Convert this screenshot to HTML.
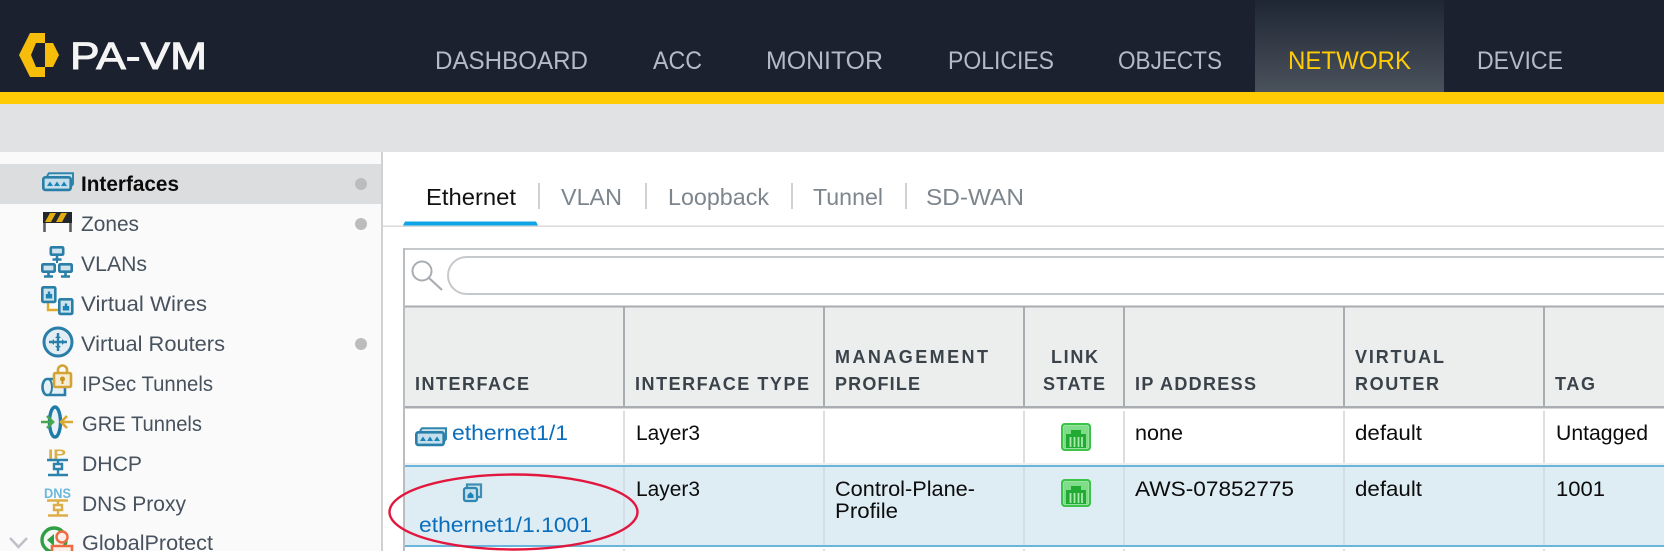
<!DOCTYPE html>
<html><head><meta charset="utf-8"><title>PA-VM</title>
<style>html,body{margin:0;padding:0;background:#fff;width:1664px;height:551px;overflow:hidden}svg{display:block}
text{font-family:"Liberation Sans",sans-serif}
.n{font-size:25px;fill:#b4bac6}.s{font-size:21px;fill:#47525e}.t{font-size:23px;fill:#7d858d}
.h{font-size:18px;font-weight:bold;fill:#3a424a}.c{font-size:21px;fill:#0c0c0c}.l{font-size:21px;fill:#0a6ebd}</style></head><body>
<svg width="1664" height="551" viewBox="0 0 1664 551" xmlns="http://www.w3.org/2000/svg">
<defs>
<linearGradient id="g" x1="0" y1="0" x2="0" y2="1"><stop offset="0" stop-color="#1f2634"/><stop offset="1" stop-color="#4a525c"/></linearGradient>
<g id="ifc"><path d="M5 4 L7 1.300 H31 V12 L29 14.500" fill="#cfe3ed" stroke="#2f86ae" stroke-width="2"/><rect x="1.300" y="5.300" width="27.400" height="12.600" rx="2" fill="#c4deeb" stroke="#2a7fa8" stroke-width="2.600"/><path d="M5 14 l3-4.500 3 4.500z M12 14 l3-4.500 3 4.500z M19 14 l3-4.500 3 4.500z" fill="#1b83b8"/></g>
<g id="mon"><rect x="1.300" y="1.300" width="12.400" height="7.400" rx="1" fill="#cfe3ed" stroke="#2a7fa8" stroke-width="2.600"/><path d="M7.500 9v3.500M3 13.500h9" stroke="#2a7fa8" stroke-width="2.600" fill="none"/></g>
<g id="port"><rect x="1.300" y="1.300" width="13" height="14.600" rx="1.200" fill="#cfe3ed" stroke="#2a7fa8" stroke-width="2.600"/><path d="M4.800 12.500V8h2V5.500h2.400V8h2v4.500z" fill="#1b83b8"/></g>
<g id="lnk"><rect x="1.200" y="1.200" width="27.600" height="25.600" rx="2.500" fill="#d4f3d6" stroke="#3cc44a" stroke-width="2.400"/><rect x="3" y="3" width="24" height="22" fill="#7fdc88"/><path d="M5 25V11H10V7H20V11H25V25Z" fill="#22ab33"/><path d="M9.500 14v10M13.500 14v10M17.500 14v10M21 14v10" stroke="#a9e9ae" stroke-width="1.800"/></g>
</defs>
<rect width="1664" height="92" fill="#1b212f"/>
<rect x="1255" width="189" height="92" fill="url(#g)"/>
<rect y="92" width="1664" height="12" fill="#ffcb05"/>
<rect y="104" width="1664" height="48" fill="#e1e2e4"/>
<path d="M30 33H45V43H36L31 55L36 67H45V77H30L19 55Z" fill="#f7bd0b"/><path d="M45 43H53L59 55L53 67H45Z" fill="#f7bd0b"/>
<text x="70" y="69" font-size="38" fill="#f4f4f4" stroke="#f4f4f4" stroke-width="1" textLength="137" lengthAdjust="spacingAndGlyphs">PA-VM</text>
<text class="n" x="435" y="69" textLength="153" lengthAdjust="spacingAndGlyphs">DASHBOARD</text>
<text class="n" x="653" y="69" textLength="49" lengthAdjust="spacingAndGlyphs">ACC</text>
<text class="n" x="766" y="69" textLength="117" lengthAdjust="spacingAndGlyphs">MONITOR</text>
<text class="n" x="948" y="69" textLength="106" lengthAdjust="spacingAndGlyphs">POLICIES</text>
<text class="n" x="1118" y="69" textLength="104" lengthAdjust="spacingAndGlyphs">OBJECTS</text>
<text class="n" x="1288" y="69" textLength="123" lengthAdjust="spacingAndGlyphs" style="fill:#ffcb05">NETWORK</text>
<text class="n" x="1477" y="69" textLength="86" lengthAdjust="spacingAndGlyphs">DEVICE</text>

<rect y="152" width="381" height="399" fill="#fafafa"/>
<rect y="164" width="381" height="40" fill="#dcdddf"/>
<rect x="381" y="152" width="2" height="399" fill="#cfd1d3"/>
<g fill="#bcbcbc"><circle cx="361" cy="184" r="6"/><circle cx="361" cy="224" r="6"/><circle cx="361" cy="344" r="6"/></g>
<text x="81" y="191" font-size="21" font-weight="bold" fill="#0b0b0b" textLength="98" lengthAdjust="spacingAndGlyphs">Interfaces</text>
<text class="s" x="81" y="231" textLength="58" lengthAdjust="spacingAndGlyphs">Zones</text>
<text class="s" x="81" y="271" textLength="66" lengthAdjust="spacingAndGlyphs">VLANs</text>
<text class="s" x="81" y="311" textLength="126" lengthAdjust="spacingAndGlyphs">Virtual Wires</text>
<text class="s" x="81" y="351" textLength="144" lengthAdjust="spacingAndGlyphs">Virtual Routers</text>
<text class="s" x="82" y="391" textLength="131" lengthAdjust="spacingAndGlyphs">IPSec Tunnels</text>
<text class="s" x="82" y="431" textLength="120" lengthAdjust="spacingAndGlyphs">GRE Tunnels</text>
<text class="s" x="82" y="471" textLength="60" lengthAdjust="spacingAndGlyphs">DHCP</text>
<text class="s" x="82" y="511" textLength="104" lengthAdjust="spacingAndGlyphs">DNS Proxy</text>
<text class="s" x="82" y="550" textLength="131" lengthAdjust="spacingAndGlyphs">GlobalProtect</text>
<use href="#ifc" x="42" y="172"/>
<!-- Zones -->
<path d="M44.500 213V232M70.500 213V232" stroke="#5a5d61" stroke-width="2.600"/>
<rect x="43" y="212" width="29" height="11" fill="#23262b"/>
<path d="M45 222l5-9h6l-5 9zM56 222l5-9h6l-5 9z" fill="#e3ad12"/>
<!-- VLANs -->
<use href="#mon" x="49.500" y="246"/><use href="#mon" x="41" y="263"/><use href="#mon" x="58" y="263"/>
<path d="M57 259V263" stroke="#2a7fa8" stroke-width="2"/>
<!-- Wires -->
<path d="M48 303V310H59" fill="none" stroke="#e0a92e" stroke-width="2.400"/>
<use href="#port" x="41" y="286"/><use href="#port" x="58" y="298"/>
<!-- Router -->
<circle cx="58" cy="342" r="14" fill="#e2eef4" stroke="#2a7fa8" stroke-width="3"/>
<path d="M49 342H67M58 333V351" stroke="#2a7fa8" stroke-width="2.400"/>
<path d="M58 335l3 3h-6zM58 349l3-3h-6zM51 342l3-3v6zM65 342l-3-3v6z" fill="#2a7fa8"/>
<!-- IPSec -->
<path d="M65 379H47a4.500 8 0 0 0 0 16H65V388" fill="#e6f0f5" stroke="#2a7fa8" stroke-width="2.600"/>
<path d="M48 379a4 8 0 0 1 0 16" fill="none" stroke="#2a7fa8" stroke-width="2"/>
<path d="M58 373V370a4.500 4.500 0 0 1 9 0V373" fill="none" stroke="#d3a333" stroke-width="2.600"/>
<rect x="54" y="373" width="17" height="14" rx="1.500" fill="#f5ecd6" stroke="#d3a333" stroke-width="2.600"/>
<circle cx="62.500" cy="379" r="2.500" fill="#c9941f"/><rect x="61.500" y="380" width="2" height="4" fill="#c9941f"/>
<!-- GRE -->
<ellipse cx="55" cy="422" rx="5.500" ry="15" fill="#e7f1f6" stroke="#1e7ba8" stroke-width="3.400"/>
<path d="M41 422H52M47 416L53 422L47 428" fill="none" stroke="#4aa64b" stroke-width="2.600"/>
<path d="M73 422H62M67 416L61 422L67 428" fill="none" stroke="#dba832" stroke-width="2.600"/>
<!-- DHCP -->
<text x="48" y="459" font-size="14" font-weight="bold" fill="#dcae48" textLength="18" lengthAdjust="spacingAndGlyphs">IP</text>
<path d="M47 460H68M58 460V464M54 464H62V469H54ZM58 469V474M48 475H68" fill="none" stroke="#2a82ad" stroke-width="2.400"/>
<!-- DNS -->
<text x="44" y="498" font-size="13.500" font-weight="bold" fill="#6db7dc" textLength="27" lengthAdjust="spacingAndGlyphs">DNS</text>
<path d="M47 500.500H68M58 501V505M54 505H62V510H54ZM58 510V515M48 515.500H68" fill="none" stroke="#dcae48" stroke-width="2.400"/>
<!-- GP -->
<path d="M10 538L18.500 547L27 538" fill="none" stroke="#bcc0c4" stroke-width="2.400"/>
<circle cx="54" cy="540" r="12" fill="#f5f9f3" stroke="#2f9e44" stroke-width="3.400"/>
<path d="M47 540L54 534V546Z" fill="#2f9e44"/>
<circle cx="62" cy="537" r="5.500" fill="#fdeee8" stroke="#ee6a41" stroke-width="2.400"/>
<path d="M52 551V546H72V551" fill="#fdeee8" stroke="#ee6a41" stroke-width="2.600"/>

<!-- Tabs -->
<text x="426" y="205" font-size="23" fill="#111" textLength="90" lengthAdjust="spacingAndGlyphs">Ethernet</text>
<text class="t" x="561" y="205" textLength="61" lengthAdjust="spacingAndGlyphs">VLAN</text>
<text class="t" x="668" y="205" textLength="101" lengthAdjust="spacingAndGlyphs">Loopback</text>
<text class="t" x="813" y="205" textLength="70" lengthAdjust="spacingAndGlyphs">Tunnel</text>
<text class="t" x="926" y="205" textLength="98" lengthAdjust="spacingAndGlyphs">SD-WAN</text>
<g fill="#cfd2d4"><rect x="538" y="183" width="2" height="26"/><rect x="645" y="183" width="2" height="26"/><rect x="791" y="183" width="2" height="26"/><rect x="905" y="183" width="2" height="26"/></g>
<rect x="383" y="225.500" width="1281" height="1.500" fill="#d8dadc"/>
<path d="M403 225.500L405 221.500H536L538 225.500Z" fill="#0ea5e6"/>

<!-- Search -->
<rect x="404" y="248" width="1260" height="2" fill="#c6c9cc"/>
<circle cx="422" cy="271" r="9.500" fill="none" stroke="#a9adb1" stroke-width="2"/><path d="M429 278L442 290" stroke="#a9adb1" stroke-width="2.200"/>
<path d="M1664 257H466.500a18 18 0 0 0 0 37H1664" fill="#fff" stroke="#c6c9cc" stroke-width="2"/>

<!-- Table header -->
<rect x="405" y="307" width="1259" height="100" fill="#eceeee"/>
<rect x="404" y="305.500" width="1260" height="2" fill="#a9adb1"/>
<rect x="404" y="406" width="1260" height="2.500" fill="#a9adb1"/>
<!-- Rows -->
<rect x="405" y="466" width="1259" height="80" fill="#deecf4"/>
<rect x="404" y="465" width="1260" height="2" fill="#6bb5dc"/>
<rect x="404" y="545" width="1260" height="2" fill="#6bb5dc"/>
<rect x="404" y="463" width="1260" height="2" fill="#eef0f0"/>
<rect x="403" y="248" width="2" height="303" fill="#b9bdc0"/>
<g fill="#a9adb1"><rect x="623" y="307" width="2" height="100"/><rect x="823" y="307" width="2" height="100"/><rect x="1023" y="307" width="2" height="100"/><rect x="1123" y="307" width="2" height="100"/><rect x="1343" y="307" width="2" height="100"/><rect x="1543" y="307" width="2" height="100"/></g>
<g fill="#dcdee0"><rect x="623" y="411" width="2" height="52"/><rect x="823" y="411" width="2" height="52"/><rect x="1023" y="411" width="2" height="52"/><rect x="1123" y="411" width="2" height="52"/><rect x="1343" y="411" width="2" height="52"/><rect x="1543" y="411" width="2" height="52"/>
<rect x="623" y="467" width="2" height="78" fill="#d3dfe6"/><rect x="823" y="467" width="2" height="78" fill="#d3dfe6"/><rect x="1023" y="467" width="2" height="78" fill="#d3dfe6"/><rect x="1123" y="467" width="2" height="78" fill="#d3dfe6"/><rect x="1343" y="467" width="2" height="78" fill="#d3dfe6"/><rect x="1543" y="467" width="2" height="78" fill="#d3dfe6"/>
<rect x="623" y="549" width="2" height="2"/><rect x="823" y="549" width="2" height="2"/><rect x="1023" y="549" width="2" height="2"/><rect x="1123" y="549" width="2" height="2"/><rect x="1343" y="549" width="2" height="2"/><rect x="1543" y="549" width="2" height="2"/></g>

<text class="h" x="415" y="390" textLength="114" lengthAdjust="spacing">INTERFACE</text>
<text class="h" x="635" y="390" textLength="174" lengthAdjust="spacing">INTERFACE TYPE</text>
<text class="h" x="835" y="363" textLength="153" lengthAdjust="spacing">MANAGEMENT</text>
<text class="h" x="835" y="390" textLength="85" lengthAdjust="spacing">PROFILE</text>
<text class="h" x="1051" y="363" textLength="47" lengthAdjust="spacing">LINK</text>
<text class="h" x="1043" y="390" textLength="62" lengthAdjust="spacing">STATE</text>
<text class="h" x="1135" y="390" textLength="121" lengthAdjust="spacing">IP ADDRESS</text>
<text class="h" x="1355" y="363" textLength="89" lengthAdjust="spacing">VIRTUAL</text>
<text class="h" x="1355" y="390" textLength="84" lengthAdjust="spacing">ROUTER</text>
<text class="h" x="1555" y="390" textLength="40" lengthAdjust="spacing">TAG</text>

<use href="#ifc" x="415" y="427"/>
<text class="l" x="452" y="440" textLength="116" lengthAdjust="spacingAndGlyphs">ethernet1/1</text>
<text class="c" x="636" y="440" textLength="64" lengthAdjust="spacingAndGlyphs">Layer3</text>
<use href="#lnk" x="1061" y="423"/>
<text class="c" x="1135" y="440" textLength="48" lengthAdjust="spacingAndGlyphs">none</text>
<text class="c" x="1355" y="440" textLength="67" lengthAdjust="spacingAndGlyphs">default</text>
<text class="c" x="1556" y="440" textLength="92" lengthAdjust="spacingAndGlyphs">Untagged</text>

<path d="M467 488V484.500H481V497H477" fill="#cfe3ed" stroke="#3f8eb3" stroke-width="2.200"/>
<rect x="464" y="488" width="13" height="13" rx="2" fill="#c4deeb" stroke="#2f86ae" stroke-width="2.200"/>
<path d="M467.500 498V495L470.500 492L473.500 495V498Z" fill="#1b83b8"/>
<text class="l" x="419" y="532" textLength="173" lengthAdjust="spacingAndGlyphs">ethernet1/1.1001</text>
<text class="c" x="636" y="496" textLength="64" lengthAdjust="spacingAndGlyphs">Layer3</text>
<text class="c" x="835" y="496" textLength="140" lengthAdjust="spacingAndGlyphs">Control-Plane-</text>
<text class="c" x="835" y="518" textLength="63" lengthAdjust="spacingAndGlyphs">Profile</text>
<use href="#lnk" x="1061" y="479"/>
<text class="c" x="1135" y="496" textLength="159" lengthAdjust="spacingAndGlyphs">AWS-07852775</text>
<text class="c" x="1355" y="496" textLength="67" lengthAdjust="spacingAndGlyphs">default</text>
<text class="c" x="1556" y="496" textLength="49" lengthAdjust="spacingAndGlyphs">1001</text>

<ellipse cx="513.500" cy="512" rx="124" ry="37.500" fill="none" stroke="#e3173e" stroke-width="2.400"/>
</svg>
</body></html>
